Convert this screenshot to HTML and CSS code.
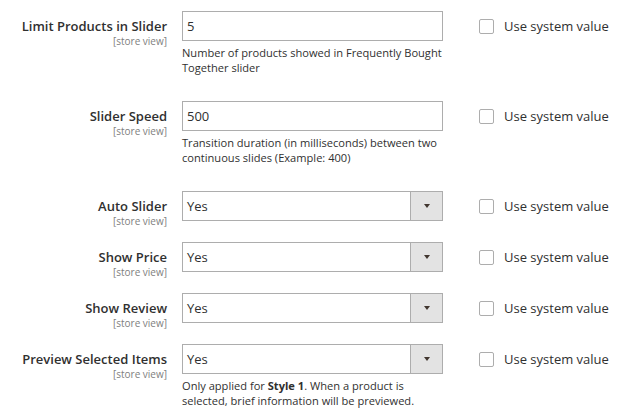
FILE: index.html
```html
<!DOCTYPE html>
<html>
<head>
<meta charset="utf-8">
<link rel="stylesheet" href="styles.css">
</head>
<body>
<div class="form">
  <div class="row">
    <div class="label"><div class="title">Limit Products in Slider</div><div class="scope">[store view]</div></div>
    <div class="control">
      <div class="input">5</div>
      <div class="note">Number of products showed in Frequently Bought<br>Together slider</div>
    </div>
    <div class="system"><span class="box"></span><span>Use system value</span></div>
  </div>
  <div class="row">
    <div class="label"><div class="title">Slider Speed</div><div class="scope">[store view]</div></div>
    <div class="control">
      <div class="input">500</div>
      <div class="note">Transition duration (in milliseconds) between two<br>continuous slides (Example: 400)</div>
    </div>
    <div class="system"><span class="box"></span><span>Use system value</span></div>
  </div>
  <div class="row">
    <div class="label"><div class="title">Auto Slider</div><div class="scope">[store view]</div></div>
    <div class="control">
      <div class="select"><span class="val">Yes</span><span class="arrow"></span></div>
    </div>
    <div class="system"><span class="box"></span><span>Use system value</span></div>
  </div>
  <div class="row">
    <div class="label"><div class="title">Show Price</div><div class="scope">[store view]</div></div>
    <div class="control">
      <div class="select"><span class="val">Yes</span><span class="arrow"></span></div>
    </div>
    <div class="system"><span class="box"></span><span>Use system value</span></div>
  </div>
  <div class="row">
    <div class="label"><div class="title">Show Review</div><div class="scope">[store view]</div></div>
    <div class="control">
      <div class="select"><span class="val">Yes</span><span class="arrow"></span></div>
    </div>
    <div class="system"><span class="box"></span><span>Use system value</span></div>
  </div>
  <div class="row">
    <div class="label"><div class="title">Preview Selected Items</div><div class="scope">[store view]</div></div>
    <div class="control">
      <div class="select"><span class="val">Yes</span><span class="arrow"></span></div>
      <div class="note">Only applied for <b>Style 1</b>. When a product is<br>selected, brief information will be previewed.</div>
    </div>
    <div class="system"><span class="box"></span><span>Use system value</span></div>
  </div>
</div>
</body>
</html>
```

FILE: styles.css
```css
html, body {
  margin: 0;
  padding: 0;
  background: #ffffff;
}
body {
  font-family: "Open Sans", "Liberation Sans", sans-serif;
  color: #303030;
  width: 628px;
  height: 418px;
  overflow: hidden;
}
.form {
  display: flex;
  flex-direction: column;
  padding-top: 11px;
}
.row {
  display: flex;
  align-items: flex-start;
  min-height: 51px;
}
.label {
  width: 167px;
  text-align: right;
  flex: none;
}
.title {
  font-size: 13px;
  font-weight: 600;
  line-height: 18px;
  padding-top: 6px;
}
.scope {
  font-size: 10px;
  line-height: 12px;
  color: #808080;
}
.control {
  width: 261px;
  margin-left: 15px;
  flex: none;
}
.input, .select {
  box-sizing: border-box;
  width: 261px;
  height: 30px;
  border: 1px solid #adadad;
  font-size: 13px;
  line-height: 28px;
  padding-left: 4px;
}
.select {
  display: flex;
  padding-left: 0;
}
.val {
  flex: 1;
  padding-left: 4px;
}
.arrow {
  width: 31px;
  border-left: 1px solid #adadad;
  background: #e3e3e3;
  display: flex;
  align-items: center;
  justify-content: center;
}
.arrow::after {
  content: "";
  width: 0;
  height: 0;
  border-left: 3.5px solid transparent;
  border-right: 3.5px solid transparent;
  border-top: 4px solid #41362f;
}
.note {
  font-size: 11.1px;
  line-height: 14.5px;
  margin-top: 5px;
  margin-bottom: 26px;
  white-space: nowrap;
}
.note b {
  font-weight: 700;
}
.system {
  margin-left: 36px;
  display: flex;
  align-items: center;
  gap: 10px;
  height: 30px;
  font-size: 13px;
}
.box {
  box-sizing: border-box;
  width: 15px;
  height: 15px;
  border: 1px solid #adadad;
  border-radius: 2px;
  background: #fff;
}
```
